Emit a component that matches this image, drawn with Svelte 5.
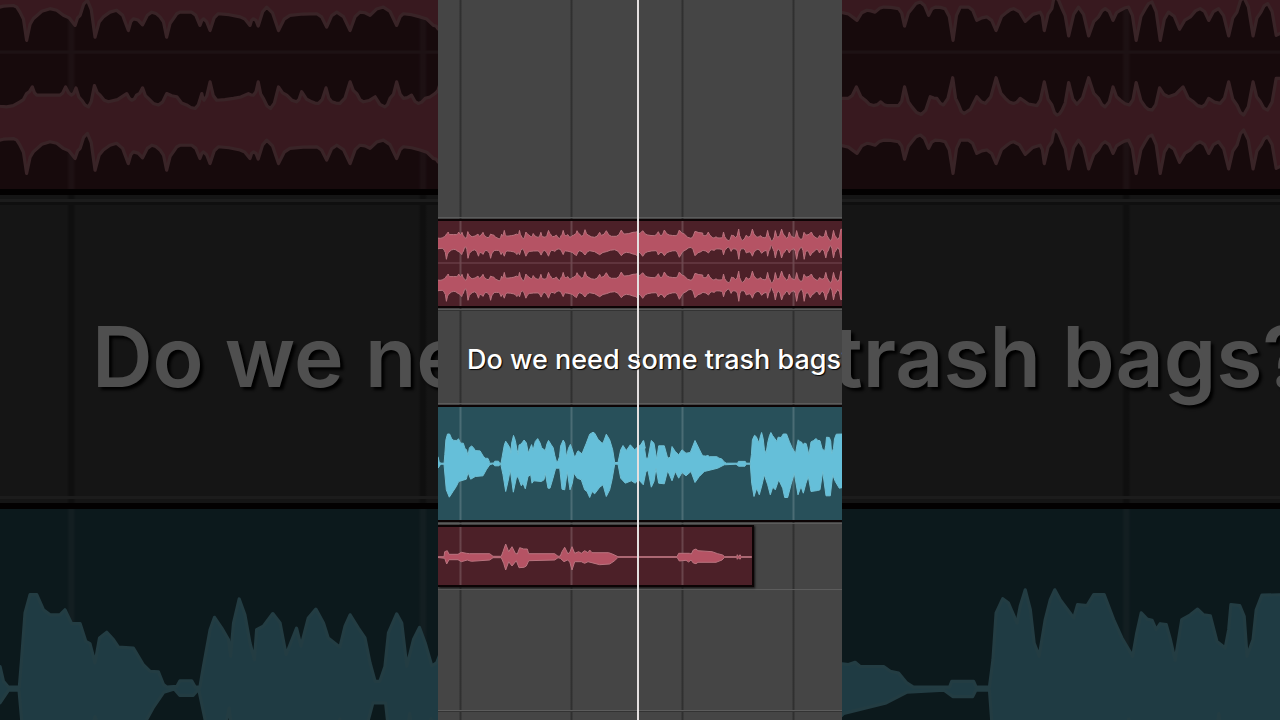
<script>
  const caption = 'Do we need some trash bags?'

  // Each run of points: [start x, points per unit, centre line, 'x,y x,y ...']
  const musicTop = [
    [0, 9.504, 370, '-20,320 20,325 60,310 80,285 97,265 110,290 180,290 197,265 215,290 228,268 245,305 265,325 283,262 300,290 325,310 380,285 395,305 410,290 428,268 445,300 475,320 500,285 530,295 560,320 585,330 605,285 612,305 630,250 650,305 700,300 745,285 760,290 775,250 790,300 812,330 835,265 860,290 890,310 905,280 935,310 955,315 978,268 995,310 1020,315 1050,250 1070,285 1090,310 1125,295 1155,325 1170,300 1190,250 1210,300 1235,290 1255,315 1275,300 1305,285'],
    [0, 3, 242, '417,205 425,215 432,222 441,202 450,218 470,225 485,210 491,219 505,205 520,222 535,222 550,203 560,215 585,210 598,208'],
    [198, 3, 242, '5,215 20,205 35,218 55,220 67,208 75,220 85,203 100,218 120,220 130,203 145,215 165,228 177,207 200,212'],
    [265.2, 9.504, 370, '0,300 25,300 48,265 75,305 100,322 122,310 140,322 175,322 193,265 215,325 243,348 270,295 290,300 310,320 337,238 355,320 372,345 410,295 435,315 468,238 495,300 520,315 540,300 590,322 612,250 635,320 650,350 665,335 685,252 710,318 745,238 775,300 795,325 818,265 840,305 868,320 888,252 915,325 935,335 958,268 985,295 1028,265 1060,310 1085,325 1105,300 1140,315 1165,250 1190,320 1210,350 1238,250 1260,310 1282,335 1308,240 1340,240'],
  ]
  const musicBottom = [
    [0, 9.504, 370, '-20,430 40,420 60,440 80,525 100,460 150,430 190,450 225,480 240,450 262,405 285,515 310,455 350,435 385,495 400,460 428,478 455,440 480,455 500,515 520,460 540,440 575,440 600,480 610,460 630,495 655,445 720,455 750,480 760,460 775,482 800,425 835,495 870,450 950,445 980,485 1010,440 1050,495 1080,440 1110,450 1150,425 1190,480 1210,445 1260,455 1300,480'],
    [0, 3, 242, '415,280 425,265 441,278 455,265 485,277 505,268 530,262 550,280 565,270 585,275 598,280'],
    [198, 3, 242, '5,268 20,282 35,268 60,265 67,278 75,270 85,280 100,268 118,265 130,285 150,262 165,255 177,280 195,268'],
    [265.2, 9.504, 370, '0,440 50,465 80,435 105,440 130,425 175,430 193,482 215,430 240,410 265,450 285,425 315,430 338,525 360,425 385,425 410,465 440,455 468,495 500,440 520,430 555,468 600,440 612,495 635,430 645,395 665,430 685,512 715,425 745,512 775,455 795,430 818,465 840,435 865,425 888,525 915,430 935,410 960,525 985,440 1018,492 1050,455 1080,430 1105,465 1135,430 1165,512 1190,440 1210,395 1238,512 1262,440 1282,415 1308,510 1340,500'],
  ]
  const voiceTop = [
    [0, 9.504, 565, '-20,500 0,500 10,545 25,562 58,562 65,480 75,340 90,285 110,285 130,330 150,345 180,345 195,330 215,372 240,372 258,425 270,432 285,490 298,415 320,398 340,420 355,442 400,445 430,495 450,515 475,517 490,555 500,562 530,560 540,543 575,543 585,562 600,562 610,500 630,390 643,353 665,385 685,420 692,470 700,370 718,298 735,345 750,430 763,480 770,390 790,380 818,342 840,370 858,465 890,385 903,440 925,355 948,328 970,370 985,415 1020,442 1035,380 1050,345 1075,385 1095,415 1110,490 1125,545 1140,545 1155,500 1165,400 1190,343 1205,370 1220,500 1240,420 1258,383 1275,430 1295,498 1310,490'],
    [0, 3, 191, '417,158 420,153 432,162 445,130 455,103 465,97 470,100 480,118 490,128 495,130 505,103 515,120 524,150 530,188 540,188 548,150 555,137 565,152 577,135 590,150 600,140 610,135 617,123 622,145'],
    [198, 3, 191, '8,145 22,122 30,175 36,175 46,122 54,130 62,178 68,138 85,138 95,175 103,172 108,140 118,155 128,165 138,150 150,160 163,158 177,122 190,148 198,165'],
    [265.2, 9.504, 565, '0,492 25,495 45,488 60,500 130,500 150,515 175,520 200,550 220,562 328,562 335,545 400,545 408,562 448,562 458,480 468,340 488,297 505,310 530,370 540,320 555,270 570,330 582,430 597,470 615,360 630,300 643,270 660,300 700,355 712,315 740,318 760,285 792,285 820,360 845,415 877,470 890,400 903,340 920,358 935,362 948,390 960,372 978,375 990,420 1005,482 1025,360 1050,345 1072,328 1090,345 1110,348 1130,425 1155,445 1165,390 1172,315 1198,318 1212,350 1220,470 1238,420 1248,330 1265,287 1340,285'],
  ]
  const voiceBottom = [
    [0, 3, 191, '-6,205 0,205 8,193 18,193 25,270 34,292 45,275 55,260 62,245 85,238 90,218 98,238 112,230 135,228 145,210 155,195 165,192 170,198 183,198 188,192 195,225 203,275 210,245 217,210 226,277 235,235 240,230 250,258 255,250 262,267 270,230 278,225 282,250 287,243 310,245 318,240 322,220 330,265 336,265 345,235 353,205 365,205 372,268 380,270 388,215 396,270 403,250 408,220 418,235 430,240 440,270 447,275 455,293 462,275 470,282 485,262 495,255 505,290 515,270 522,240 530,193 540,193 548,235 562,250 580,243 592,250 603,235'],
    [198, 3, 191, '8,240 22,255 30,215 36,212 46,262 54,245 60,205 68,250 85,252 95,212 108,243 118,215 128,235 138,218 150,228 165,215 177,248 190,230 205,215 245,205 265,195 300,193 308,199 327,199 330,193 343,193 347,250 354,290 362,265 370,285 378,255 385,225 395,255 403,285 410,262 418,270 428,240 440,265 446,293 455,293 465,255 475,220 486,285 495,260 502,280 510,250 517,230 525,275 545,272 552,270 560,215 570,288 583,288 590,225 598,245 610,265 624,262'],
  ]
  const doubleTop = [
    [0, 3, 471, '-6,470 18,470 20,455 28,452 33,463 60,463 70,457 85,460 95,461 155,461 165,469 190,469 195,455 203,432 212,455 222,440 232,460 238,462 245,443 257,447 268,447 272,461 350,461 360,469 367,468 372,455 380,442 390,462 396,455 402,440 410,460 422,455 430,460 440,452 450,458 455,450 462,458 512,458 525,463 540,470'],
    [198, 3, 471, '8,470 123,470 128,460 160,460 166,462 172,450 180,447 186,452 228,455 245,461 260,465 266,470 302,470 304,464 308,470 312,464 316,470 347,470'],
  ]
  const doubleBottom = [
    [0, 3, 471, '-6,472 20,475 26,492 33,479 60,479 70,485 88,480 100,484 155,480 165,473 190,473 197,490 203,510 212,485 222,498 235,482 243,503 258,502 265,498 272,482 350,480 360,473 367,475 378,485 388,480 395,485 402,510 410,485 430,485 440,490 450,485 485,494 515,492 530,482 540,472'],
    [198, 3, 471, '8,472 123,472 130,483 150,481 158,486 165,480 172,489 180,491 186,487 240,487 258,480 266,472 302,472 304,478 308,473 312,478 316,472 347,472'],
  ]

  // Pulls the middle of every slope towards the centre line, so peaks get thin tips
  function sharpen(points, mid) {
    return points.flatMap(([x, y], i) => {
      if (i === 0) return [[x, y]]
      const [px, py] = points[i - 1]
      const inner = Math.abs(y - mid) < Math.abs(py - mid) ? y : py
      const outer = inner === y ? py : y
      return [[(x + px) / 2, inner * 0.75 + outer * 0.25], [x, y]]
    })
  }

  function trace(runs, mid, spiky) {
    const points = runs.flatMap(([start, scale, centre, list]) =>
      list.split(' ').map((point) => {
        const [x, y] = point.split(',').map(Number)
        return [start + x / scale, mid + (y - centre) / scale]
      })
    )
    return (spiky ? sharpen(points, mid) : points).map(
      ([x, y]) => `${x.toFixed(1)} ${y.toFixed(1)}`
    )
  }

  function wave(top, bottom, mid, spiky = false) {
    return `M${trace(top, mid, spiky).join('L')}L${trace(bottom, mid, spiky).reverse().join('L')}Z`
  }

  const left = wave(musicTop, musicBottom, 22, true)
  const right = wave(musicTop, musicBottom, 64, true)
  const voice = wave(voiceTop, voiceBottom, 56.5)
  const double = wave(doubleTop, doubleBottom, 30)
</script>

{#snippet timeline()}
  <div class="lane head"></div>
  <div class="lane music">
    <div class="clip red">
      <svg viewBox="0 0 404 85" preserveAspectRatio="none">
        <path class="divider" d="M0 42H404" />
        <path d={left} />
        <path d={right} />
      </svg>
    </div>
  </div>
  <div class="lane text">
    <p>{caption}</p>
  </div>
  <div class="lane voice">
    <div class="clip teal">
      <svg viewBox="0 0 404 113" preserveAspectRatio="none">
        <path d={voice} />
      </svg>
    </div>
  </div>
  <div class="lane double">
    <div class="clip red short">
      <svg viewBox="0 0 404 58" preserveAspectRatio="none">
        <path d={double} />
      </svg>
    </div>
  </div>
  <div class="lane spare"></div>
  <div class="lane rest"></div>
{/snippet}

<main>
  <div class="backdrop" aria-hidden="true">
    <div class="frame">
      {@render timeline()}
    </div>
  </div>
  <div class="frame player">
    <div class="playhead"></div>
    {@render timeline()}
  </div>
</main>

<style>
  :global(body) {
    margin: 0;
    background: #000;
  }

  main {
    position: relative;
    display: flex;
    align-items: center;
    justify-content: center;
    height: 100vh;
    overflow: hidden;
  }

  .backdrop {
    --px: calc(100vw / 404);
    --caption: 600 84px;
    position: absolute;
    inset: 0;
    display: flex;
    align-items: center;
    justify-content: center;
    overflow: hidden;
    opacity: 0.31;
  }

  .player {
    --px: calc(100vh / 720);
    --caption: 500 27px;
  }

  .frame {
    position: relative;
    display: flex;
    flex: none;
    flex-direction: column;
    width: calc(404 * var(--px));
    height: calc(720 * var(--px));
    overflow: hidden;
    background: #454545;
  }

  .lane {
    box-sizing: border-box;
    flex: none;
    padding-top: var(--px);
    border-bottom: var(--px) solid #5c5c5c;
    background: repeating-linear-gradient(
      90deg,
      transparent 0 calc(21 * var(--px)),
      #303030 calc(22 * var(--px)) calc(23 * var(--px)),
      transparent calc(24 * var(--px)) calc(111 * var(--px))
    );
  }

  .head {
    height: calc(218 * var(--px));
  }

  .music {
    height: calc(92 * var(--px));
  }

  .text {
    display: flex;
    align-items: center;
    height: calc(94 * var(--px));
    padding-top: calc(4 * var(--px));
    padding-left: calc(29 * var(--px));
    border-top: var(--px) solid #333;
  }

  .voice {
    height: calc(120 * var(--px));
  }

  .double {
    height: calc(66 * var(--px));
  }

  .spare {
    height: calc(121 * var(--px));
  }

  .rest {
    flex: 1;
    border-top: var(--px) solid #333;
    border-bottom: 0;
  }

  .clip {
    width: 100%;
    overflow: hidden;
    border: solid #0c0405;
    border-width: calc(2 * var(--px)) 0;
    background: repeating-linear-gradient(
      90deg,
      transparent 0 calc(21 * var(--px)),
      rgb(255 255 255 / 0.16) calc(22 * var(--px)) calc(23 * var(--px)),
      transparent calc(24 * var(--px)) calc(111 * var(--px))
    );
  }

  .red {
    background-color: #4c2028;
    fill: #b55364;
    stroke: #b9747f;
  }

  .teal {
    background-color: #28505a;
    fill: #65bfd9;
    stroke: #70c0d5;
  }

  .backdrop .clip {
    background-image: repeating-linear-gradient(
      90deg,
      transparent 0 calc(21 * var(--px)),
      rgb(255 255 255 / 0.1) calc(22 * var(--px)) calc(23 * var(--px)),
      transparent calc(24 * var(--px)) calc(111 * var(--px))
    );
  }

  .short {
    width: calc(314 * var(--px));
    border-right-width: calc(2 * var(--px));
    box-shadow: var(--px) var(--px) calc(2 * var(--px)) #111;
  }

  svg {
    display: block;
    width: calc(404 * var(--px));
    height: auto;
    stroke-width: 1;
    stroke-linejoin: round;
  }

  .divider {
    stroke: #754852;
  }

  .backdrop .divider {
    stroke: #5f3a42;
  }

  p {
    position: relative;
    z-index: 2;
    margin: 0;
    font: var(--caption) Inter, sans-serif;
    color: #fff;
    white-space: nowrap;
    text-shadow: var(--px) var(--px) var(--px) #000;
  }

  .playhead {
    position: absolute;
    z-index: 1;
    top: 0;
    bottom: 0;
    left: calc(199 * var(--px));
    width: calc(2 * var(--px));
    background: #e4e0e0;
  }
</style>
